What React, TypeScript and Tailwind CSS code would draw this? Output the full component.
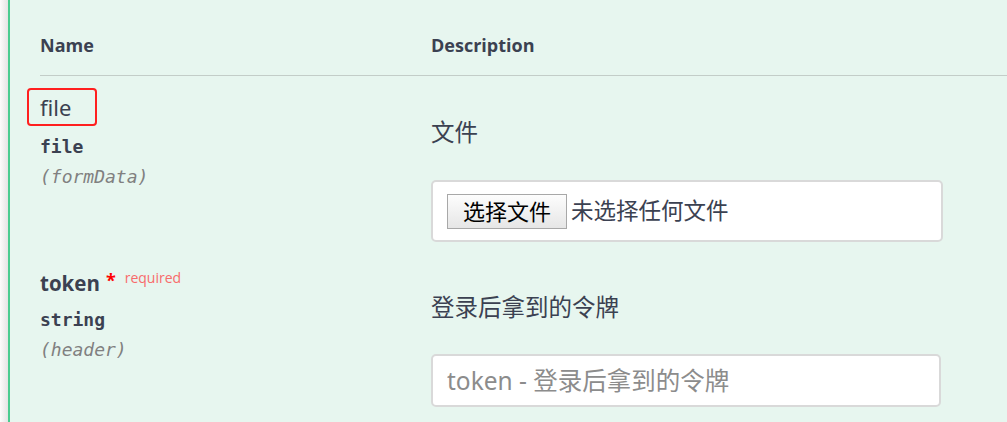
import React from "react";

const sans = "font-['Open_Sans','Noto_Sans_CJK_SC',sans-serif]";
const cjk = "font-['Noto_Sans','Noto_Sans_CJK_SC',sans-serif]";
const mono = "font-['DejaVu_Sans_Mono',monospace]";

export default function App() {
  return (
    <div className="flex h-[422px] w-[1007px] overflow-hidden bg-white">
      <div className="w-[8px] shrink-0 bg-linear-to-r from-[#fcfcfc] to-[#e4e4e4]" />
      <div className="w-[2px] shrink-0 bg-[#49cc90]" />
      <div className="flex-1 bg-[#e7f6ef] pl-[30px] text-[#3b4151]">
        {/* header */}
        <div className="flex h-[76px] items-start border-b border-[#c3cdc8] pt-[33px]">
          <div className={`w-[391px] text-[18px] font-bold leading-[24px] ${sans}`}>Name</div>
          <div className={`text-[18px] font-bold leading-[24px] ${sans}`}>Description</div>
        </div>

        {/* row 1 */}
        <div className="flex items-start">
          <div className="w-[391px]">
            <div className="mt-[12px] ml-[-13px] flex h-[38px] w-[70px] items-center rounded-[4px] border-2 border-[#ff1f1f] pl-[11px]">
              <span className={`text-[22px] font-normal leading-[30px] text-[#3b4151] ${cjk}`}>file</span>
            </div>
            <div className={`mt-[6px] text-[18px] font-bold leading-[30px] ${mono}`}>file</div>
            <div className={`text-[18px] italic leading-[30px] text-[#808080] ${mono}`}>(formData)</div>
          </div>
          <div>
            <div className={`mt-[41px] text-[23.5px] leading-[30px] ${cjk}`}>文件</div>
            <div className="mt-[33px] flex h-[62px] w-[512px] items-center rounded-[5px] border-2 border-[#d9d9d9] bg-white pl-[14px]">
              <div className={`flex h-[35px] w-[120px] items-center justify-center border border-[#a8a8a8] bg-linear-to-b from-[#fdfdfd] to-[#e6e6e6] text-[22px] leading-[30px] text-black ${cjk}`}>
                选择文件
              </div>
              <span className={`ml-[4px] text-[22.5px] leading-[30px] text-[#3b4151] ${cjk}`}>未选择任何文件</span>
            </div>
          </div>
        </div>

        {/* row 2 */}
        <div className="flex items-start">
          <div className="w-[391px]">
            <div className="mt-[26px] flex items-start leading-[30px]">
              <span className={`text-[20.5px] font-bold leading-[30px] ${sans}`}>token</span>
              <span className={`ml-[6px] text-[18px] font-bold leading-[24px] text-[#ff0000] ${sans}`}>*</span>
              <span className={`ml-[9px] text-[14px] leading-[20px] text-[#f86b6b] ${sans}`}>required</span>
            </div>
            <div className={`mt-[7px] text-[18px] font-bold leading-[30px] ${mono}`}>string</div>
            <div className={`text-[18px] italic leading-[30px] text-[#808080] ${mono}`}>(header)</div>
          </div>
          <div>
            <div className={`mt-[50px] text-[23.5px] leading-[30px] ${cjk}`}>登录后拿到的令牌</div>
            <input
              readOnly
              placeholder="token - 登录后拿到的令牌"
              className={`mt-[32px] block h-[53px] w-[510px] rounded-[5px] border-2 border-[#d9d9d9] bg-white pl-[14px] text-[24.5px] outline-none placeholder:text-[#8c8c8c] ${cjk}`}
            />
          </div>
        </div>
      </div>
    </div>
  );
}
